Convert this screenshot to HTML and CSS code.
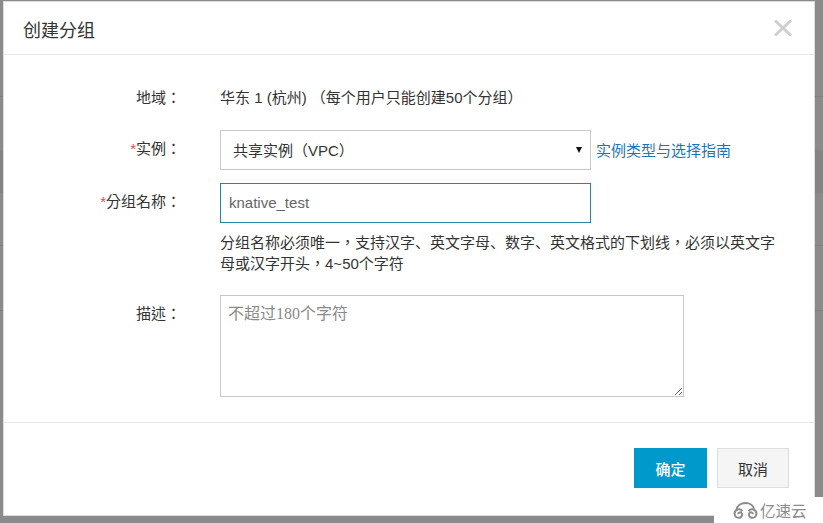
FILE: index.html
```html
<!DOCTYPE html>
<html lang="zh-CN">
<head>
    <meta charset="utf-8">
    <title>创建分组</title>
    <link rel="stylesheet" href="styles.css">
</head>
<body>

<div class="modal">
    <div class="modal-header">
        <h1>创建分组</h1>
        <svg class="close-icon" width="18" height="16" viewBox="0 0 18 16">
            <path d="M1 0.5 L17 15.5 M17 0.5 L1 15.5"></path>
        </svg>
    </div>

    <form class="modal-body">
        <div class="form-row">
            <label class="form-label" lang="zh-TW">地域：</label>
            <div class="form-value">华东 1 (杭州) <span class="punct" lang="zh-TW">（</span>每个用户只能创建50个分组<span class="punct" lang="zh-TW">）</span></div>
        </div>

        <div class="form-row">
            <label class="form-label" lang="zh-TW" for="instance"><span class="required">*</span>实例：</label>
            <div class="select-line">
                <div class="select-wrap">
                    <select id="instance" class="select" lang="zh-TW">
                        <option>共享实例（VPC）</option>
                    </select>
                </div>
                <a class="guide-link" href="#">实例类型与选择指南</a>
            </div>
        </div>

        <div class="form-row">
            <label class="form-label" lang="zh-TW" for="groupName"><span class="required">*</span>分组名称：</label>
            <div>
                <input id="groupName" class="name-input" type="text" value="knative_test">
                <p class="help">分组名称必须唯一<span class="punct" lang="zh-TW">，</span>支持汉字、英文字母、数字、英文格式的下划线<span class="punct" lang="zh-TW">，</span>必须以英文字<br>母或汉字开头<span class="punct" lang="zh-TW">，</span>4~50个字符</p>
            </div>
        </div>

        <div class="form-row">
            <label class="form-label" lang="zh-TW" for="desc">描述：</label>
            <textarea id="desc" class="desc" placeholder="不超过180个字符"></textarea>
        </div>
    </form>

    <div class="modal-footer">
        <button type="button" class="btn btn-primary">确定</button>
        <button type="button" class="btn">取消</button>
    </div>
</div>

<div class="watermark">
    <svg class="watermark-logo" width="25" height="17" viewBox="0 0 25 17">
        <path d="M3.6 8 C4 3.5 8 1 12.5 1 C17 1 20.6 3.5 21.2 7.6"></path>
        <path d="M9.4 9.2 C8.4 7.6 6.8 7 5.2 7.4 C2.8 8 1.4 10 1.6 12 C1.9 14.4 3.8 15.8 5.8 15.7 C7.8 15.6 9.2 14.2 9.1 12.4 C9 11 7.8 10.2 6.6 10.4 C5.6 10.6 5.1 11.4 5.4 12.3"></path>
        <path d="M15.6 9.2 C16.6 7.6 18.2 7 19.8 7.4 C22.2 8 23.6 10 23.4 12 C23.1 14.4 21.2 15.8 19.2 15.7 C17.2 15.6 15.8 14.2 15.9 12.4 C16 11 17.2 10.2 18.4 10.4 C19.4 10.6 19.9 11.4 19.6 12.3"></path>
    </svg>
    <span>亿速云</span>
</div>

</body>
</html>
```

FILE: styles.css
```css
html, body {
    margin: 0;
    height: 100%;
}

/* the dimmed table behind the dialog only shows as thin lines at the edges */
body {
    position: relative;
    overflow: hidden;
    padding: 1px 8px 7px 3px;
    box-sizing: border-box;
    font-family: "Liberation Sans", "Noto Sans CJK SC", sans-serif;
    font-size: 15px;
    color: #333;
    text-spacing-trim: space-all;
    background-color: #8b8b8b;
    background-image:
        linear-gradient(#7f7f7f, #7f7f7f),
        linear-gradient(#7f7f7f, #7f7f7f),
        linear-gradient(#848484, #848484),
        linear-gradient(#7f7f7f, #7f7f7f);
    background-size: 100% 1px, 100% 1px, 100% 43px, 100% 1px;
    background-position: 0 96px, 0 245px, 0 150px, 0 310px;
    background-repeat: no-repeat;
}

.modal {
    width: 812px;
    height: 515px;
    box-sizing: border-box;
    background-color: #fff;
    box-shadow: inset 0 0 0 1px #dcdcdc;
    display: flex;
    flex-direction: column;
}

.modal-header {
    height: 54px;
    box-sizing: border-box;
    flex: none;
    padding: 0 23px 0 20px;
    border-bottom: 1px solid #e8e8e8;
    display: flex;
    align-items: center;
    justify-content: space-between;
}

h1 {
    margin: 2px 0 0 0;
    font-size: 18px;
    font-weight: normal;
}

.close-icon path {
    fill: none;
    stroke: #cfcfcf;
    stroke-width: 3;
}

.modal-body {
    flex: 1;
    padding-top: 24px;
    display: flex;
    flex-direction: column;
    gap: 13px;
}

.form-row {
    display: grid;
    grid-template-columns: 178px 1fr;
    column-gap: 39px;
}

.form-label {
    line-height: 38px;
    text-align: right;
    font-family: "Liberation Sans", "Noto Sans CJK TC", sans-serif;
}

.required {
    color: #e5484d;
}

.punct {
    font-family: "Noto Sans CJK TC", sans-serif;
    line-height: 0;
}

.form-value {
    line-height: 38px;
}

.select-line {
    display: flex;
    align-items: center;
    gap: 5px;
}

.select-wrap {
    position: relative;
    width: 371px;
    height: 40px;
}
.select-wrap::after {
    content: "";
    position: absolute;
    right: 9px;
    top: 17px;
    border-left: 3.5px solid transparent;
    border-right: 3.5px solid transparent;
    border-top: 6px solid #111;
}

.select {
    appearance: none;
    width: 100%;
    height: 100%;
    box-sizing: border-box;
    padding: 0 12px;
    border: 1px solid #c8c8c8;
    border-radius: 0;
    background-color: #fff;
    font-family: "Liberation Sans", "Noto Sans CJK TC", sans-serif;
    font-size: 15px;
    color: #333;
}

.guide-link {
    margin-bottom: 2px;
    color: #1b75bb;
    text-decoration: none;
}

.name-input {
    display: block;
    width: 371px;
    height: 40px;
    box-sizing: border-box;
    padding: 0 8px 2px 8px;
    border: 1px solid #1f8aa8;
    font: inherit;
    color: #666;
    outline: none;
}

.help {
    margin: 9px 0 8px 0;
    line-height: 21px;
}

.desc {
    display: block;
    width: 464px;
    height: 102px;
    box-sizing: border-box;
    padding: 8px 7px;
    border: 1px solid #c8c8c8;
    font-family: "Liberation Serif", "Noto Sans CJK SC", serif;
    font-size: 16px;
    line-height: 20px;
    outline: none;
}
.desc::placeholder {
    color: #8a8a8a;
}

.modal-footer {
    flex: none;
    height: 94px;
    box-sizing: border-box;
    padding: 25px 26px 0 0;
    border-top: 1px solid #e8e8e8;
    display: flex;
    justify-content: flex-end;
    gap: 10px;
}

.btn {
    width: 72px;
    height: 40px;
    box-sizing: border-box;
    border: 1px solid #ddd;
    background-color: #f5f5f5;
    font: inherit;
    color: #333;
}

.btn-primary {
    width: 73px;
    border-color: #0099cc;
    background-color: #0099cc;
    color: #fff;
    font-weight: 500;
}

/* site stamp in the corner */
.watermark {
    position: absolute;
    right: 0;
    bottom: 0;
    width: 109px;
    height: 26px;
    box-sizing: border-box;
    padding-left: 19px;
    background-color: #fff;
    display: flex;
    align-items: center;
    gap: 2px;
    font-size: 15.5px;
    color: #8c8c8c;
    white-space: nowrap;
}

.watermark-logo {
    flex: none;
}
.watermark-logo path {
    fill: none;
    stroke: #8c8c8c;
    stroke-width: 2;
}
```
